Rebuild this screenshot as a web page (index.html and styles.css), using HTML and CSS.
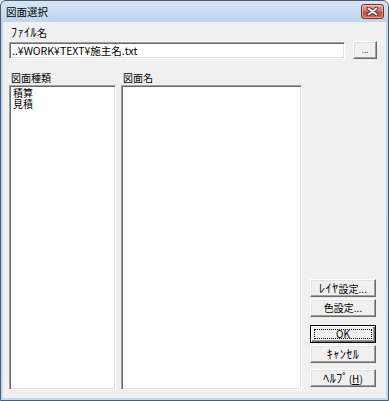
FILE: index.html
```html
<!DOCTYPE html>
<html lang="ja">
<head>
    <meta charset="UTF-8">
    <title>図面選択</title>
    <link rel="stylesheet" href="styles.css">
</head>
<body>
    <div class="window">
        <div class="titlebar">
            <span class="title">図面選択</span>
            <button class="close-btn" aria-label="閉じる">
                <svg width="13" height="9" viewBox="0 0 13 9">
                    <path d="M2.5 1.5 L10.5 7.5 M10.5 1.5 L2.5 7.5" stroke="#5b1f18" stroke-width="3.6" stroke-linecap="round"/>
                    <path d="M2.5 1.5 L10.5 7.5 M10.5 1.5 L2.5 7.5" stroke="#fff" stroke-width="2" stroke-linecap="round"/>
                </svg>
            </button>
        </div>

        <div class="client">
            <div class="label"><span class="kana">ﾌｧｲﾙ</span>名</div>
            <div class="file-row">
                <div class="textbox">..¥WORK¥TEXT¥施主名.txt</div>
                <button class="btn browse">...</button>
            </div>

            <div class="lists">
                <div class="col col-kind">
                    <div class="label">図面種類</div>
                    <div class="listbox">
                        <div class="item">積算</div>
                        <div class="item">見積</div>
                    </div>
                </div>
                <div class="col col-name">
                    <div class="label">図面名</div>
                    <div class="listbox"></div>
                </div>
                <div class="buttons">
                    <button class="btn"><span class="kana">ﾚｲﾔ</span>設定...</button>
                    <button class="btn">色設定...</button>
                    <button class="btn default"><span class="focus">OK</span></button>
                    <button class="btn"><span class="kana">ｷｬﾝｾﾙ</span></button>
                    <button class="btn"><span class="kana">ﾍﾙﾌﾟ</span>(<u>H</u>)</button>
                </div>
            </div>
        </div>
    </div>
</body>
</html>
```

FILE: styles.css
```css
body {
    margin: 0;
    font-family: "Noto Sans CJK JP", sans-serif;
    font-size: 10px;
    color: #000;
    background: #fff;
}

.window {
    width: 389px;
    height: 401px;
    box-sizing: border-box;
    border: 1px solid #4e5b6b;
    border-radius: 6px 6px 0 0;
    padding: 0 2px 2px;
    background: linear-gradient(#d6e5f5, #bed5ed 21px, #c3d9f0);
    display: flex;
    flex-direction: column;
}

.titlebar {
    height: 21px;
    display: flex;
    align-items: flex-start;
    justify-content: space-between;
}

.title {
    margin: 4px 0 0 3px;
    line-height: 14px;
    font-size: 10.5px;
}

.close-btn {
    margin: 3px 2px 0 0;
    width: 23px;
    height: 15px;
    padding: 0;
    border: 1px solid #7a3128;
    border-radius: 3px;
    background: linear-gradient(#eba796, #d77867 45%, #c44a3b 55%, #d06c5b);
    box-shadow: inset 0 0 0 1px rgba(255, 220, 210, 0.5);
    display: flex;
    align-items: center;
    justify-content: center;
}

.client {
    flex: 1;
    background: #f0f0f0;
    padding: 3px 0 8px 6px;
    display: flex;
    flex-direction: column;
}

/* 半角カナは小さく見えるので少し大きめに */
.kana {
    font-size: 12px;
    letter-spacing: 0.5px;
}

.label {
    line-height: 14px;
    padding-left: 2px;
}

.file-row {
    margin-top: 1px;
    height: 18px;
    display: flex;
    gap: 8px;
}

.textbox {
    margin-top: 1px;
    width: 336px;
    height: 17px;
    box-sizing: border-box;
    background: #fff;
    border: 1px solid;
    border-color: #a0a0a0 #fff #fff #a0a0a0;
    box-shadow: inset 1px 1px 0 #696969, inset -1px -1px 0 #e3e3e3;
    padding: 1px 2px;
    line-height: 13px;
    font-size: 10.5px;
    white-space: nowrap;
}

.btn {
    font: inherit;
    color: #000;
    height: 18px;
    padding: 0;
    background: #f0f0f0;
    border: 1px solid;
    border-color: #fff #696969 #696969 #fff;
    box-shadow: inset -1px -1px 0 #a0a0a0, inset 1px 1px 0 #e3e3e3;
    line-height: 14px;
    white-space: nowrap;
}

.browse {
    width: 24px;
    font-size: 8px;
    color: #333;
}

.lists {
    flex: 1;
    margin-top: 12px;
    display: flex;
    gap: 5px;
}

.col {
    display: flex;
    flex-direction: column;
}

.col-kind {
    width: 107px;
}

.col-name {
    width: 181px;
}

.listbox {
    flex: 1;
    background: #fff;
    border: 1px solid;
    border-color: #a0a0a0 #fff #fff #a0a0a0;
    box-shadow: inset 1px 1px 0 #696969, inset -1px -1px 0 #e3e3e3;
    padding: 1px 3px;
}

.item {
    line-height: 11px;
}

.buttons {
    width: 66px;
    margin-left: 3px;
    padding-bottom: 3px;
    display: flex;
    flex-direction: column;
    justify-content: flex-end;
    gap: 2px;
}

.buttons .btn:nth-child(3) {
    margin-top: 6px;
}

.buttons .btn:nth-child(5) {
    margin-top: 4px;
}

.btn.default {
    border: 1px solid #000;
    box-shadow: inset 1px 1px 0 #fff, inset -1px -1px 0 #696969, inset -2px -2px 0 #a0a0a0;
    padding: 3px;
}

.focus {
    display: block;
    height: 100%;
    box-sizing: border-box;
    border: 1px dotted #000;
    line-height: 8px;
}
```
